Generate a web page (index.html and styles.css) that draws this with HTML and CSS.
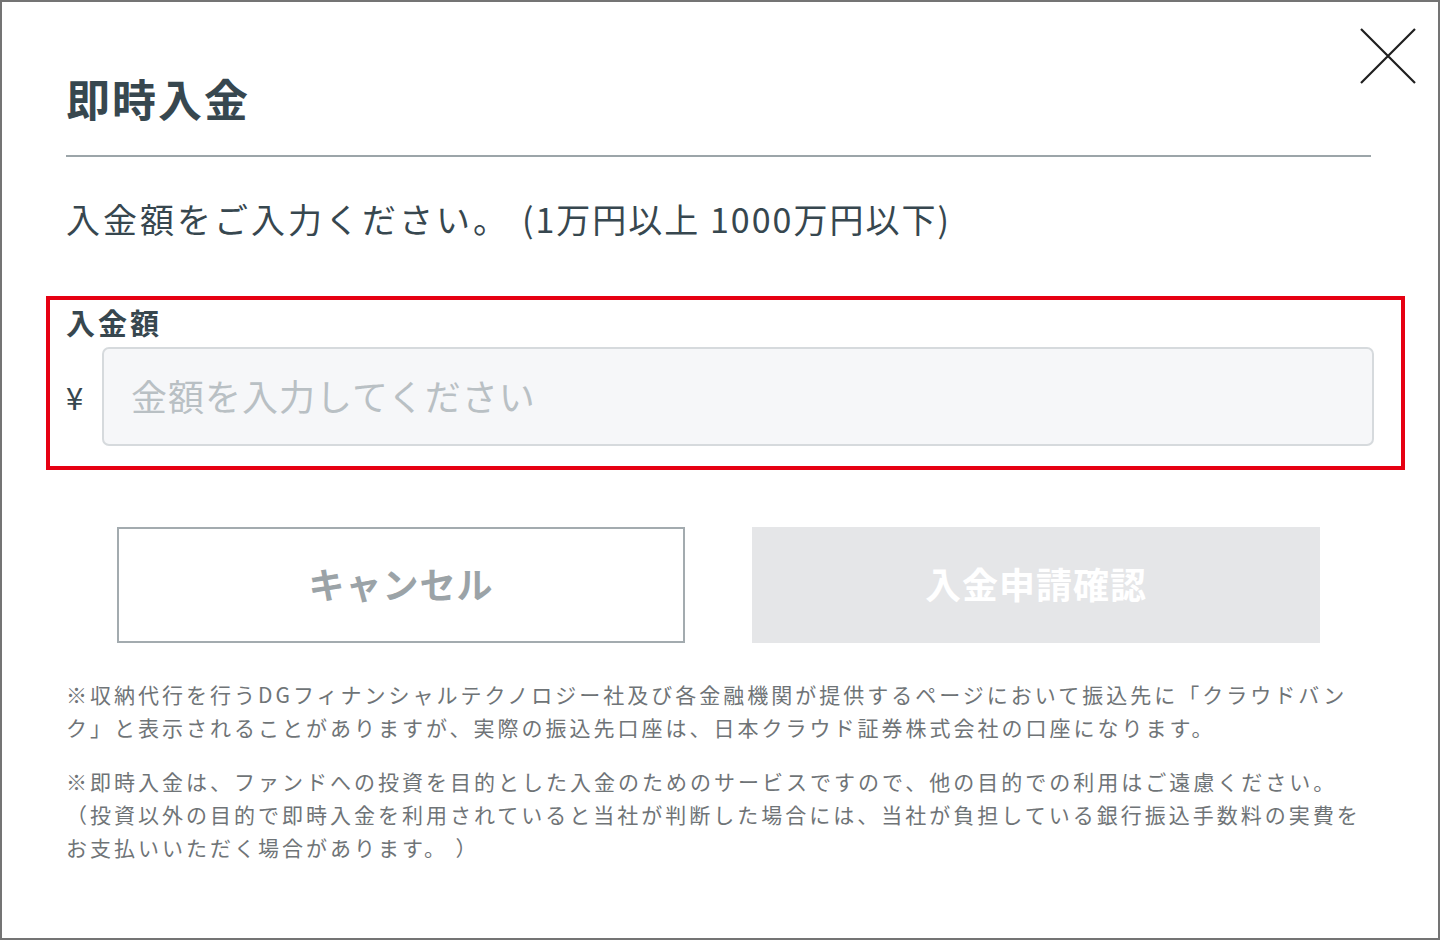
FILE: index.html
```html
<!DOCTYPE html>
<html lang="ja">
<head>
<meta charset="utf-8">
<title>即時入金</title>
<link rel="stylesheet" href="styles.css">
</head>
<body>
<div class="modal">
  <button class="close" type="button" aria-label="閉じる">
    <svg width="56" height="56" viewBox="0 0 56 56"><path d="M1 1 L55 55 M55 1 L1 55" stroke="#1f1f1f" stroke-width="2.2" fill="none"/></svg>
  </button>
  <h1 class="title">即時入金</h1>
  <hr class="divider">
  <p class="lead">入金額をご入力ください。<span class="range">(1万円以上 1000万円以下)</span></p>
  <div class="field highlight">
    <label class="field-label" for="amount">入金額</label>
    <div class="field-row">
      <span class="yen">¥</span>
      <input id="amount" class="amount" type="text" placeholder="金額を入力してください">
    </div>
  </div>
  <div class="actions">
    <button class="btn btn-cancel" type="button">キャンセル</button>
    <button class="btn btn-confirm" type="button" disabled>入金申請確認</button>
  </div>
  <p class="note">※収納代行を行うDGフィナンシャルテクノロジー社及び各金融機関が提供するページにおいて振込先に「クラウドバン<br>ク」と表示されることがありますが、実際の振込先口座は、日本クラウド証券株式会社の口座になります。</p>
  <p class="note">※即時入金は、ファンドへの投資を目的とした入金のためのサービスですので、他の目的での利用はご遠慮ください。<br>（投資以外の目的で即時入金を利用されていると当社が判断した場合には、当社が負担している銀行振込手数料の実費を<br>お支払いいただく場合があります。 ）</p>
</div>
</body>
</html>
```

FILE: styles.css
```css
* { box-sizing: border-box; }
html, body { margin: 0; padding: 0; background: #fff; }
body {
  font-family: "Noto Sans CJK JP", "Noto Sans", sans-serif;
  color: #37474f;
}
.modal {
  position: relative;
  width: 1440px;
  height: 940px;
  border: 2px solid #747474;
  padding: 66px 67px 0 64px;
}
.close {
  position: absolute;
  top: 26px;
  right: 22px;
  width: 56px;
  height: 56px;
  padding: 0;
  border: 0;
  background: none;
  cursor: pointer;
}
.close svg { display: block; }
.title {
  margin: 0;
  font-size: 44px;
  line-height: 60px;
  font-weight: 700;
  letter-spacing: 2px;
  color: #37474f;
}
.divider {
  margin: 27px 0 0;
  border: 0;
  height: 2px;
  background: #9ca5a9;
}
.lead {
  margin: 38px 0 0;
  font-size: 34px;
  line-height: 48px;
  letter-spacing: 3px;
  color: #37474f;
}
.range {
  margin-left: 12px;
  letter-spacing: 2px;
}
.highlight {
  border: 4px solid #e60012;
  margin: 53px -34px 0 -20px;
  padding: 2px 27px 20px 16px;
}
.field-label {
  display: block;
  font-size: 29px;
  line-height: 40px;
  font-weight: 700;
  letter-spacing: 3px;
  color: #37474f;
}
.field-row {
  display: flex;
  align-items: center;
  margin-top: 5px;
}
.yen {
  width: 36px;
  flex: none;
  font-size: 31px;
  line-height: 1;
  color: #37474f;
}
.amount {
  flex: 1;
  height: 99px;
  border: 2px solid #d6dadd;
  border-radius: 7px;
  background: #f6f7f9;
  padding: 0 0 4px 27px;
  font-family: inherit;
  font-size: 36px;
  letter-spacing: 1px;
  color: #37474f;
  outline: none;
}
.amount::placeholder { color: #b9c0c4; }
.actions {
  display: flex;
  justify-content: center;
  gap: 67px;
  margin-top: 57px;
}
.btn {
  width: 568px;
  height: 116px;
  padding: 0 0 4px;
  font-family: inherit;
  font-size: 36px;
  font-weight: 700;
  letter-spacing: 1px;
  cursor: pointer;
}
.btn-cancel {
  background: #fff;
  border: 2px solid #a3abaf;
  color: #9ba3a7;
}
.btn-confirm {
  background: #e5e6e8;
  border: 0;
  color: #fff;
}
.note {
  margin: 35px 0 0;
  font-size: 21px;
  line-height: 33px;
  letter-spacing: 3px;
  color: #6f7477;
  white-space: nowrap;
}
.note + .note { margin-top: 21px; }
```
